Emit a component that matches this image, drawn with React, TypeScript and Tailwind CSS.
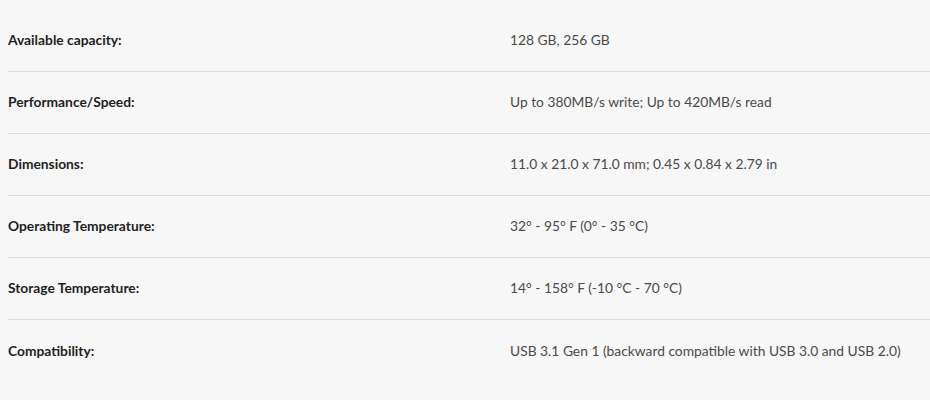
const specs = [
    { label: 'Available capacity:', value: '128 GB, 256 GB' },
    { label: 'Performance/Speed:', value: 'Up to 380MB/s write; Up to 420MB/s read' },
    { label: 'Dimensions:', value: '11.0 x 21.0 x 71.0 mm; 0.45 x 0.84 x 2.79 in' },
    { label: 'Operating Temperature:', value: '32° - 95° F (0° - 35 °C)' },
    { label: 'Storage Temperature:', value: '14° - 158° F (-10 °C - 70 °C)' },
    { label: 'Compatibility:', value: 'USB 3.1 Gen 1 (backward compatible with USB 3.0 and USB 2.0)' },
];

export default function App() {
    return (
        <div className="w-[930px] h-[400px] bg-[#f7f7f7] pl-2 pt-[10px] font-['Lato',sans-serif] text-[13.8px] overflow-hidden">
            {specs.map((s, i) => (
                <div
                    key={s.label}
                    className={`flex items-center h-[62px] ${i < specs.length - 1 ? 'border-b border-[#dcdcdc]' : ''}`}
                >
                    <div className="w-[502px] font-bold text-[#1f1f1f]">{s.label}</div>
                    <div className="text-[#4a4a4a]">{s.value}</div>
                </div>
            ))}
        </div>
    );
}
